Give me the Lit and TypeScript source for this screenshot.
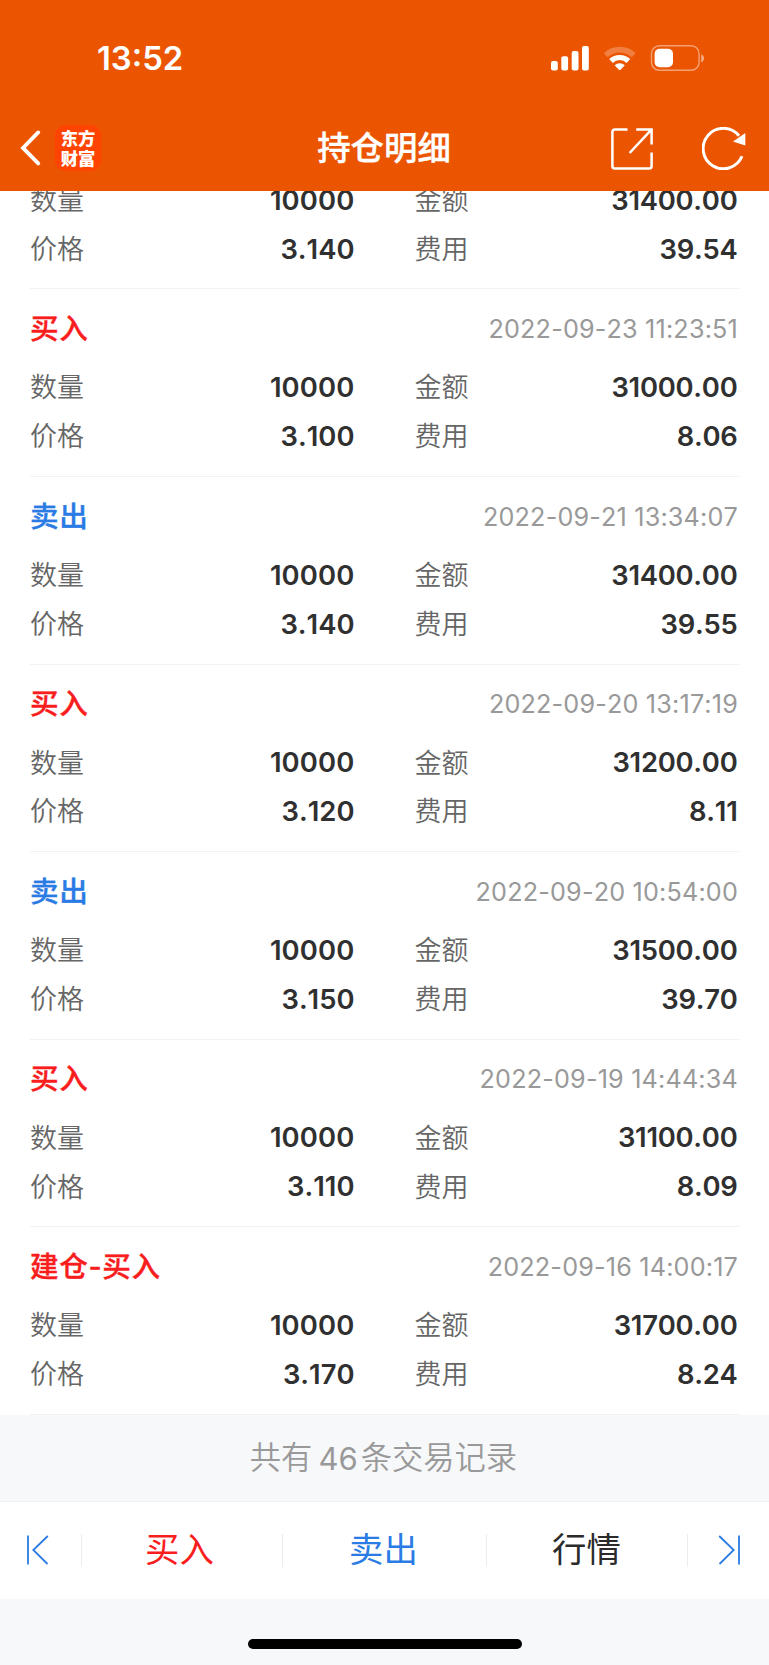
import { LitElement, html, css, svg } from "lit";
import { customElement, property } from "lit/decorators.js";
import { classMap } from "lit/directives/class-map.js";

interface Trade {
  kind: "buy" | "sell";
  label: string;
  time: string;
  qty: string;
  amount: string;
  price: string;
  fee: string;
}

const trade = (
  kind: "buy" | "sell", label: string, time: string,
  amount: string, price: string, fee: string,
): Trade => ({ kind, label, time, qty: "10000", amount, price, fee });

const TRADES: Trade[] = [
  trade("sell", "", "", "31400.00", "3.140", "39.54"),
  trade("buy", "买入", "2022-09-23 11:23:51", "31000.00", "3.100", "8.06"),
  trade("sell", "卖出", "2022-09-21 13:34:07", "31400.00", "3.140", "39.55"),
  trade("buy", "买入", "2022-09-20 13:17:19", "31200.00", "3.120", "8.11"),
  trade("sell", "卖出", "2022-09-20 10:54:00", "31500.00", "3.150", "39.70"),
  trade("buy", "买入", "2022-09-19 14:44:34", "31100.00", "3.110", "8.09"),
  trade("buy", "建仓-买入", "2022-09-16 14:00:17", "31700.00", "3.170", "8.24"),
];

@customElement("trade-record")
export class TradeRecord extends LitElement {
  @property({ attribute: false }) trade!: Trade;

  static styles = css`
    :host {
      display: block;
      flex: none;
      box-sizing: border-box;
      height: 187.55px;
      padding: 15px 0 0;
      border-bottom: 1.4px solid #f2f2f3;
    }
    .head {
      display: flex;
      align-items: center;
      justify-content: space-between;
      height: 49px;
      margin-bottom: 9.8px;
    }
    .kind {
      padding-top: 1px;
      font-size: 28.6px;
      font-weight: 500;
      letter-spacing: 0.6px;
      -webkit-text-stroke: 0.35px currentColor;
    }
    .kind.buy { color: #f91d1d; }
    .kind.sell { color: #2a7be4; }
    .time {
      padding-top: 1px;
      padding-right: 1px;
      font-size: 25.2px;
      color: #999;
      font-kerning: none;
      letter-spacing: 0.18px;
    }
    .cells {
      display: grid;
      grid-template-columns: 324.5px 323px;
      column-gap: 60px;
      grid-auto-rows: 48.9px;
    }
    .cell {
      display: flex;
      align-items: center;
      justify-content: space-between;
    }
    .name {
      padding-top: 2px;
      font-size: 27px;
      font-weight: 350;
      color: #666;
    }
    .value {
      font-size: 27.4px;
      font-weight: 600;
      font-kerning: none;
      color: #303030;
    }
    .cell:nth-child(even) .value { letter-spacing: -0.25px; }
    .cell:first-child .value { letter-spacing: 0.15px; }
  `;

  private cell(name: string, value: string) {
    return html`<div class="cell"><span class="name">${name}</span><span class="value">${value}</span></div>`;
  }

  render() {
    const t = this.trade;
    return html`
      <div class="head">
        <span class=${classMap({ kind: true, [t.kind]: true })}>${t.label}</span>
        <span class="time">${t.time}</span>
      </div>
      <div class="cells">
        ${this.cell("数量", t.qty)}${this.cell("金额", t.amount)}
        ${this.cell("价格", t.price)}${this.cell("费用", t.fee)}
      </div>
    `;
  }
}

@customElement("app-root")
export class AppRoot extends LitElement {
  static styles = css`
    :host {
      display: flex;
      flex-direction: column;
      height: 1665px;
      overflow: hidden;
      background: #f7f8fa;
      font-family: Inter, "Noto Sans CJK SC", sans-serif;
      line-height: 1.2;
      white-space: nowrap;
    }
    svg { display: block; flex: none; }
    .top {
      flex: none;
      height: 191px;
      background: #eb5502;
      color: #fff;
    }
    .status {
      display: flex;
      align-items: center;
      justify-content: space-between;
      box-sizing: border-box;
      height: 106px;
      padding: 9px 64px 0 97px;
    }
    .clock {
      padding-top: 2px;
      font-size: 32.8px;
      font-weight: 600;
    }
    .bar {
      display: grid;
      grid-template-columns: 1fr auto 1fr;
      align-items: center;
      height: 85px;
    }
    .lead, .tools {
      display: flex;
      align-items: center;
    }
    .lead { margin-top: -1px; padding-left: 20px; gap: 14px; }
    .tools { justify-content: flex-end; gap: 49px; padding-right: 23px; }
    .logo {
      box-sizing: border-box;
      width: 46px;
      height: 46px;
      padding-top: 3px;
      border-radius: 10px;
      background: #ff4300;
      font-family: "Noto Sans CJK SC", sans-serif;
      font-size: 17.3px;
      font-weight: 900;
      line-height: 19.5px;
      text-align: center;
    }
    .title {
      padding-right: 1px;
      font-size: 33.4px;
      font-weight: 500;
      -webkit-text-stroke: 0.4px currentColor;
    }
    .list {
      flex: none;
      display: flex;
      flex-direction: column;
      justify-content: flex-end;
      height: 1223.7px;
      padding: 0 30px;
      overflow: hidden;
      background: #fff;
    }
    .total {
      display: flex;
      align-items: center;
      justify-content: center;
      flex: none;
      box-sizing: border-box;
      height: 86px;
      padding: 2px 2px 0 0;
      color: #999;
      font-size: 31.3px;
      font-weight: 350;
    }
    .count { padding: 0 3px 0 6px; font-weight: 400; font-size: 31px; }
    .nav {
      display: grid;
      grid-template-columns: 82px 201px 204px 201px 1fr;
      align-items: center;
      flex: none;
      box-sizing: border-box;
      height: 98px;
      border-top: 1px solid #eff0f2;
      background: #fff;
      font-size: 34.4px;
    }
    .item {
      display: flex;
      align-items: center;
      justify-content: center;
      height: 33px;
      border-right: 1px solid #ececec;
    }
    .item:last-child { border: 0; }
    .item.first, .item.last { color: #2a7be4; }
    .item.first { padding-right: 5px; }
    .item.last { padding-left: 1px; }
    .buy { padding-right: 5px; color: #f91d1d; }
    .sell { padding-right: 2px; color: #2a7be4; }
    .quote { padding-right: 1px; color: #2b2b2b; }
    .item span { margin-top: -2px; }
    .home {
      width: 274px;
      height: 10px;
      margin: 40px auto 0;
      border-radius: 5px;
      background: #000;
    }
  `;

  private statusIcons() {
    return svg`<svg width="154" height="28" viewBox="551 43 154 28" fill="#fff">
      <rect x="551" y="60" width="6.8" height="9.4" rx="2"/>
      <rect x="561.3" y="55.3" width="6.8" height="14.1" rx="2"/>
      <rect x="571.7" y="50" width="6.8" height="19.4" rx="2"/>
      <rect x="582" y="45" width="6.8" height="24.4" rx="2"/>
      <path d="M605.7 54.2a20.4 20.4 0 0 1 28 0" fill="none" stroke="#fff" stroke-opacity=".25" stroke-width="5.6"/>
      <path d="M611 60a12.6 12.6 0 0 1 17.4 0" fill="none" stroke="#fff" stroke-width="5.2"/>
      <path d="M614.6 64.2a7.6 7.6 0 0 1 10.2 0l-4.3 4.5q-.8.8-1.6 0z"/>
      <rect x="651.5" y="44.7" width="47.6" height="24.6" rx="8" fill="none" stroke="#fff" stroke-opacity=".45" stroke-width="1.4"/>
      <rect x="654.6" y="47.8" width="18.4" height="18.4" rx="5"/>
      <path d="M701.2 53.2q2.8 1 2.8 4t-2.8 4z" fill-opacity=".5"/>
    </svg>`;
  }

  render() {
    return html`
      <header class="top">
        <div class="status">
          <span class="clock">13:52</span>
          ${this.statusIcons()}
        </div>
        <div class="bar">
          <div class="lead">
            <svg width="21" height="36" viewBox="0 0 21 36" fill="none" stroke="#fff" stroke-width="3.8">
              <path d="M18.2 2.4 3 17.9 18.2 33.4" stroke-linecap="round" stroke-linejoin="miter"/>
            </svg>
            <div class="logo">东方<br />财富</div>
          </div>
          <div class="title">持仓明细</div>
          <div class="tools">
            <svg width="42" height="42" viewBox="0 0 42 42" fill="none" stroke="#fff" stroke-width="2.5">
              <path d="M16.5 1.4H4Q1.4 1.4 1.4 4v34q0 2.6 2.6 2.6h34q2.6 0 2.6-2.6V24.5"/>
              <path d="M25.2 1.4h15.4v15.2M40.2 1.8 18.6 25"/>
            </svg>
            <svg width="44" height="43" viewBox="0 0 44 43" fill="none">
              <path d="M40 29.3A20.2 20.2 0 1 1 37 8.8" stroke="#fff" stroke-width="3"/>
              <path d="M43.3 6v12.4L31 14.6z" fill="#fff"/>
            </svg>
          </div>
        </div>
      </header>
      <main class="list">
        ${TRADES.map((t) => html`<trade-record .trade=${t}></trade-record>`)}
      </main>
      <div class="total">共有<span class="count">46</span>条交易记录</div>
      <nav class="nav">
        <div class="item first">
          <svg width="24" height="30" viewBox="0 0 24 30" fill="none" stroke="currentColor" stroke-width="1.8">
            <path d="M2 .5v29M21.8 1 7.3 15l14.2 14"/>
          </svg>
        </div>
        <div class="item buy"><span>买入</span></div>
        <div class="item sell"><span>卖出</span></div>
        <div class="item quote"><span>行情</span></div>
        <div class="item last">
          <svg width="24" height="30" viewBox="0 0 24 30" fill="none" stroke="currentColor" stroke-width="1.8">
            <path d="M22 .5v29M2.2 1l14.5 14L2.5 29"/>
          </svg>
        </div>
      </nav>
      <div class="home"></div>
    `;
  }
}
